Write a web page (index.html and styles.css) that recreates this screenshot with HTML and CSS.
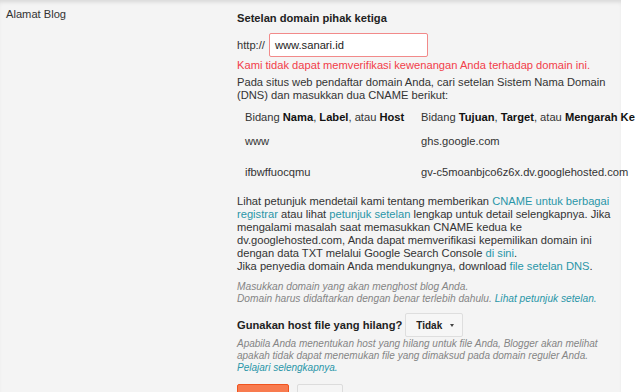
FILE: index.html
```html
<!DOCTYPE html>
<html lang="id">
<head>
<meta charset="utf-8">
<link rel="stylesheet" href="styles.css">
</head>
<body>
<div class="panel">
  <div class="row">
    <div class="label">Alamat Blog</div>
    <div class="content">
      <div class="heading">Setelan domain pihak ketiga</div>
      <div class="url-row">
        <span class="proto">http://</span>
        <div class="input">www.sanari.id</div>
      </div>
      <div class="error">Kami tidak dapat memverifikasi kewenangan Anda terhadap domain ini.</div>
      <p class="para">Pada situs web pendaftar domain Anda, cari setelan Sistem Nama Domain (DNS) dan masukkan dua CNAME berikut:</p>
      <div class="dns">
        <div class="cell head">Bidang <b>Nama</b>, <b>Label</b>, atau <b>Host</b></div>
        <div class="cell head">Bidang <b>Tujuan</b>, <b>Target</b>, atau <b>Mengarah Ke</b></div>
        <div class="cell">www</div>
        <div class="cell">ghs.google.com</div>
        <div class="cell">ifbwffuocqmu</div>
        <div class="cell">gv-c5moanbjco6z6x.dv.googlehosted.com</div>
      </div>
      <p class="para help">Lihat petunjuk mendetail kami tentang memberikan <a>CNAME untuk berbagai registrar</a> atau lihat <a>petunjuk setelan</a> lengkap untuk detail selengkapnya. Jika mengalami masalah saat memasukkan CNAME kedua ke dv.googlehosted.com, Anda dapat memverifikasi kepemilikan domain ini dengan data TXT melalui Google Search Console <a>di sini</a>.<br>Jika penyedia domain Anda mendukungnya, download <a>file setelan DNS</a>.</p>
      <p class="hint">Masukkan domain yang akan menghost blog Anda.<br>Domain harus didaftarkan dengan benar terlebih dahulu. <a>Lihat petunjuk setelan.</a></p>
      <div class="missing">
        <span class="q">Gunakan host file yang hilang?</span>
        <div class="select">Tidak <span class="caret"></span></div>
      </div>
      <p class="hint hint2">Apabila Anda menentukan host yang hilang untuk file Anda, Blogger akan melihat apakah tidak dapat menemukan file yang dimaksud pada domain reguler Anda.<br><a>Pelajari selengkapnya.</a></p>
      <div class="buttons">
        <button class="btn primary">Simpan</button>
        <button class="btn">Batal</button>
      </div>
    </div>
  </div>
</div>
</body>
</html>
```
FILE: styles.css
```css
html, body {
  margin: 0;
  padding: 0;
  background: #ffffff;
  overflow: hidden;
}
body {
  font-family: "Liberation Sans", Arial, sans-serif;
  font-size: 11.15px;
  line-height: 13px;
  color: #222;
}
.panel {
  width: 621px;
  height: 392px;
  background: #f4f4f4;
  box-shadow: inset 0 4px 4px -2px rgba(0,0,0,0.12);
}
.row {
  display: grid;
  grid-template-columns: 237px 383px;
}
.label {
  padding: 8px 0 0 6px;
  color: #333;
}
.content {
  padding-top: 12px;
}
.heading {
  font-weight: bold;
  color: #222;
}
.url-row {
  display: flex;
  align-items: center;
  gap: 4px;
  margin-top: 8px;
}
.proto {
  color: #333;
}
.input {
  box-sizing: border-box;
  width: 159px;
  height: 24px;
  border: 1px solid #f28a8a;
  border-radius: 2px;
  background: #fff;
  padding: 0 5px;
  display: flex;
  align-items: center;
  font-size: 11.2px;
  color: #222;
}
.error {
  color: #f2404a;
  margin-top: 2px;
}
.para {
  margin: 4px 0 0;
  color: #333;
}
.dns {
  display: grid;
  grid-template-columns: 176px max-content;
  white-space: nowrap;
  margin-left: 8px;
  margin-top: 2px;
}
.cell {
  padding: 9px 0;
  color: #333;
}
.cell.head {
  padding: 7px 0 2px;
}
.cell b {
  color: #111;
}
.help {
  margin-top: 7px;
}
a {
  color: #2a96a8;
}
.hint {
  margin: 8px 0 0;
  font-style: italic;
  color: #858585;
  font-size: 10.2px;
  line-height: 12px;
}
.missing {
  display: flex;
  align-items: center;
  gap: 3px;
  margin-top: 8px;
}
.q {
  font-weight: bold;
  color: #222;
}
.select {
  box-sizing: border-box;
  height: 24px;
  width: 58px;
  border: 1px solid #dedede;
  border-radius: 2px;
  background: #f6f6f6;
  display: flex;
  align-items: center;
  padding-left: 10px;
  font-weight: bold;
  font-size: 10px;
  color: #222;
}
.caret {
  width: 0;
  height: 0;
  border-left: 2.5px solid transparent;
  border-right: 2.5px solid transparent;
  border-top: 3px solid #444;
  margin-left: 8px;
}
.hint2 {
  margin-top: 1px;
  font-size: 10px;
}
.buttons {
  display: flex;
  gap: 8px;
  margin-top: 10px;
}
.btn {
  box-sizing: border-box;
  height: 29px;
  padding: 0 10px;
  border: 1px solid #dcdcdc;
  border-radius: 2px;
  background: #f5f5f5;
  font-family: "Liberation Sans", Arial, sans-serif;
  font-size: 10px;
  font-weight: bold;
  color: #444;
}
.btn.primary {
  width: 52px;
  background: #f87b4f;
  border-color: #f0541f;
  color: #fff;
}
```
